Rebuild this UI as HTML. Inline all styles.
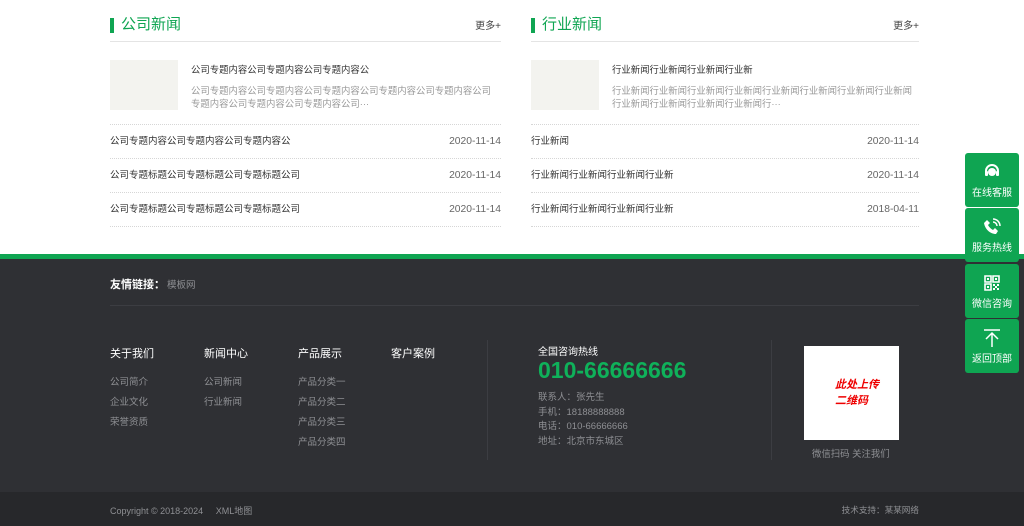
<!DOCTYPE html>
<html><head><meta charset="utf-8"><style>
*{margin:0;padding:0;box-sizing:border-box}
body{width:1024px;height:526px;overflow:hidden;background:#fff;font-family:"Liberation Sans","Noto Sans CJK SC",sans-serif;position:relative;color:#333}
.a{position:absolute;white-space:nowrap}
.title{position:absolute;top:15px;font-size:15px;color:#0fa552;padding-left:11px;line-height:20px}
.title:before{content:"";position:absolute;left:0;top:3px;width:4px;height:15px;background:#0fa552}
.more{position:absolute;top:17px;font-size:10px;color:#444;text-align:right;width:60px}
.hl{position:absolute;height:1px;background:#e4e4e4}
.dl{position:absolute;height:0;border-top:1px dotted #d6d6d6}
.row{position:absolute;font-size:9.5px;color:#333;line-height:14px}
.date{position:absolute;font-size:10.3px;color:#666;line-height:14px;text-align:right;width:80px}
.img{position:absolute;width:68px;height:50px;background:#f3f3ef}
.sb{position:absolute;left:965px;width:54px;height:54px;background:#0fa552;border-radius:3px;color:#fff;font-size:10px;text-align:center}
.sb span{position:absolute;left:0;right:0;top:31px}
.sb svg{position:absolute;left:17px;top:9px}
.fh{position:absolute;font-size:11px;color:#fff;top:345px}
.fi{position:absolute;font-size:9.5px;color:#8e8f93;line-height:20px;top:373px}
</style></head><body>
<div class="title" style="left:110px">公司新闻</div>
<div class="more" style="left:441px">更多+</div>
<div class="hl" style="left:110px;top:41px;width:391px"></div>
<div class="img" style="left:110px;top:60px"></div>
<div class="a" style="left:191px;top:62px;font-size:9.4px;color:#333">公司专题内容公司专题内容公司专题内容公</div>
<div class="a" style="left:191px;top:84px;font-size:9.4px;color:#999;line-height:13px;white-space:normal;width:306px">公司专题内容公司专题内容公司专题内容公司专题内容公司专题内容公司专题内容公司专题内容公司专题内容公司···</div>
<div class="dl" style="left:110px;top:124px;width:391px"></div>
<div class="row" style="left:110px;top:135px">公司专题内容公司专题内容公司专题内容公</div><div class="date" style="left:421px;top:135px">2020-11-14</div>
<div class="dl" style="left:110px;top:158px;width:391px"></div>
<div class="row" style="left:110px;top:169px">公司专题标题公司专题标题公司专题标题公司</div><div class="date" style="left:421px;top:169px">2020-11-14</div>
<div class="dl" style="left:110px;top:192px;width:391px"></div>
<div class="row" style="left:110px;top:203px">公司专题标题公司专题标题公司专题标题公司</div><div class="date" style="left:421px;top:203px">2020-11-14</div>
<div class="dl" style="left:110px;top:226px;width:391px"></div>
<div class="title" style="left:531px">行业新闻</div>
<div class="more" style="left:859px">更多+</div>
<div class="hl" style="left:531px;top:41px;width:388px"></div>
<div class="img" style="left:531px;top:60px"></div>
<div class="a" style="left:612px;top:62px;font-size:9.4px;color:#333">行业新闻行业新闻行业新闻行业新</div>
<div class="a" style="left:612px;top:84px;font-size:9.4px;color:#999;line-height:13px;white-space:normal;width:306px">行业新闻行业新闻行业新闻行业新闻行业新闻行业新闻行业新闻行业新闻行业新闻行业新闻行业新闻行业新闻行···</div>
<div class="dl" style="left:531px;top:124px;width:388px"></div>
<div class="row" style="left:531px;top:135px">行业新闻</div><div class="date" style="left:839px;top:135px">2020-11-14</div>
<div class="dl" style="left:531px;top:158px;width:388px"></div>
<div class="row" style="left:531px;top:169px">行业新闻行业新闻行业新闻行业新</div><div class="date" style="left:839px;top:169px">2020-11-14</div>
<div class="dl" style="left:531px;top:192px;width:388px"></div>
<div class="row" style="left:531px;top:203px">行业新闻行业新闻行业新闻行业新</div><div class="date" style="left:839px;top:203px">2018-04-11</div>
<div class="dl" style="left:531px;top:226px;width:388px"></div>
<div class="a" style="left:0;top:254px;width:1024px;height:5px;background:#0fa552"></div>
<div class="a" style="left:0;top:259px;width:1024px;height:233px;background:#2f3034"></div>
<div class="a" style="left:0;top:492px;width:1024px;height:34px;background:#27282b"></div>
<div class="a" style="left:110px;top:276px;font-size:11px;color:#fff;font-weight:bold">友情链接：</div>
<div class="a" style="left:167px;top:277px;font-size:9.5px;color:#8e8f93">模板网</div>
<div class="a" style="left:110px;top:305px;width:809px;height:1px;background:#3c3d42"></div>
<div class="fh" style="left:110px">关于我们</div>
<div class="fh" style="left:204px">新闻中心</div>
<div class="fh" style="left:298px">产品展示</div>
<div class="fh" style="left:391px">客户案例</div>
<div class="fi" style="left:110px">公司简介<br>企业文化<br>荣誉资质</div>
<div class="fi" style="left:204px">公司新闻<br>行业新闻</div>
<div class="fi" style="left:298px">产品分类一<br>产品分类二<br>产品分类三<br>产品分类四</div>
<div class="a" style="left:487px;top:340px;width:1px;height:120px;background:#3c3d42"></div>
<div class="a" style="left:538px;top:343px;font-size:10px;color:#fff">全国咨询热线</div>
<div class="a" style="left:538px;top:356px;font-size:23px;font-weight:bold;color:#0fb15a;line-height:28px">010-66666666</div>
<div class="a" style="left:538px;top:391px;font-size:9.5px;color:#8e8f93;line-height:14.7px">联系人：张先生<br>手机：18188888888<br>电话：010-66666666<br>地址：北京市东城区</div>
<div class="a" style="left:771px;top:340px;width:1px;height:120px;background:#3c3d42"></div>
<div class="a" style="left:804px;top:346px;width:95px;height:94px;background:#fff"></div>
<div class="a" style="left:835px;top:377px;font-size:11px;color:#e00;font-weight:bold;font-style:italic;line-height:16px">此处上传<br>二维码</div>
<div class="a" style="left:812px;top:446px;font-size:9.4px;color:#8e8f93">微信扫码 关注我们</div>
<div class="a" style="left:110px;top:504px;font-size:9px;color:#8e8f93">Copyright © 2018-2024 &nbsp;&nbsp;&nbsp; XML地图</div>
<div class="a" style="left:819px;width:100px;text-align:right;top:504px;font-size:8.6px;color:#8e8f93">技术支持：某某网络</div>
<div class="sb" style="top:153px"><svg width="20" height="20" viewBox="0 0 20 20"><path d="M4 11V9a6 6 0 0 1 12 0v2" stroke="#fff" stroke-width="2" fill="none"/><circle cx="10" cy="10" r="4" fill="#fff"/><rect x="3" y="9" width="3" height="5" rx="1" fill="#fff"/><rect x="14" y="9" width="3" height="5" rx="1" fill="#fff"/></svg><span>在线客服</span></div>
<div class="sb" style="top:208px"><svg width="20" height="20" viewBox="0 0 20 20"><path d="M5 3l3 3-2 2c1 2 3 4 5 5l2-2 3 3-2 3C8 17 3 12 2 6z" fill="#fff"/><path d="M11 5a4 4 0 0 1 4 4M11 2a7 7 0 0 1 7 7" stroke="#fff" stroke-width="1.5" fill="none"/></svg><span>服务热线</span></div>
<div class="sb" style="top:264px"><svg width="20" height="20" viewBox="0 0 20 20"><path d="M3 3h6v6H3zM11 3h6v6h-6zM3 11h6v6H3z" stroke="#fff" stroke-width="1.6" fill="none"/><rect x="5" y="5" width="2" height="2" fill="#fff"/><rect x="13" y="5" width="2" height="2" fill="#fff"/><rect x="5" y="13" width="2" height="2" fill="#fff"/><path d="M11 11h2v2h-2zM15 11h2v2h-2zM13 13h2v2h-2zM11 15h2v2h-2zM15 15h2v2h-2z" fill="#fff"/></svg><span>微信咨询</span></div>
<div class="sb" style="top:319px"><svg width="20" height="20" viewBox="0 0 20 20"><path d="M2 2h16M10 5v14M4 11l6-6 6 6" stroke="#fff" stroke-width="1.5" fill="none"/></svg><span>返回顶部</span></div>
</body></html>
